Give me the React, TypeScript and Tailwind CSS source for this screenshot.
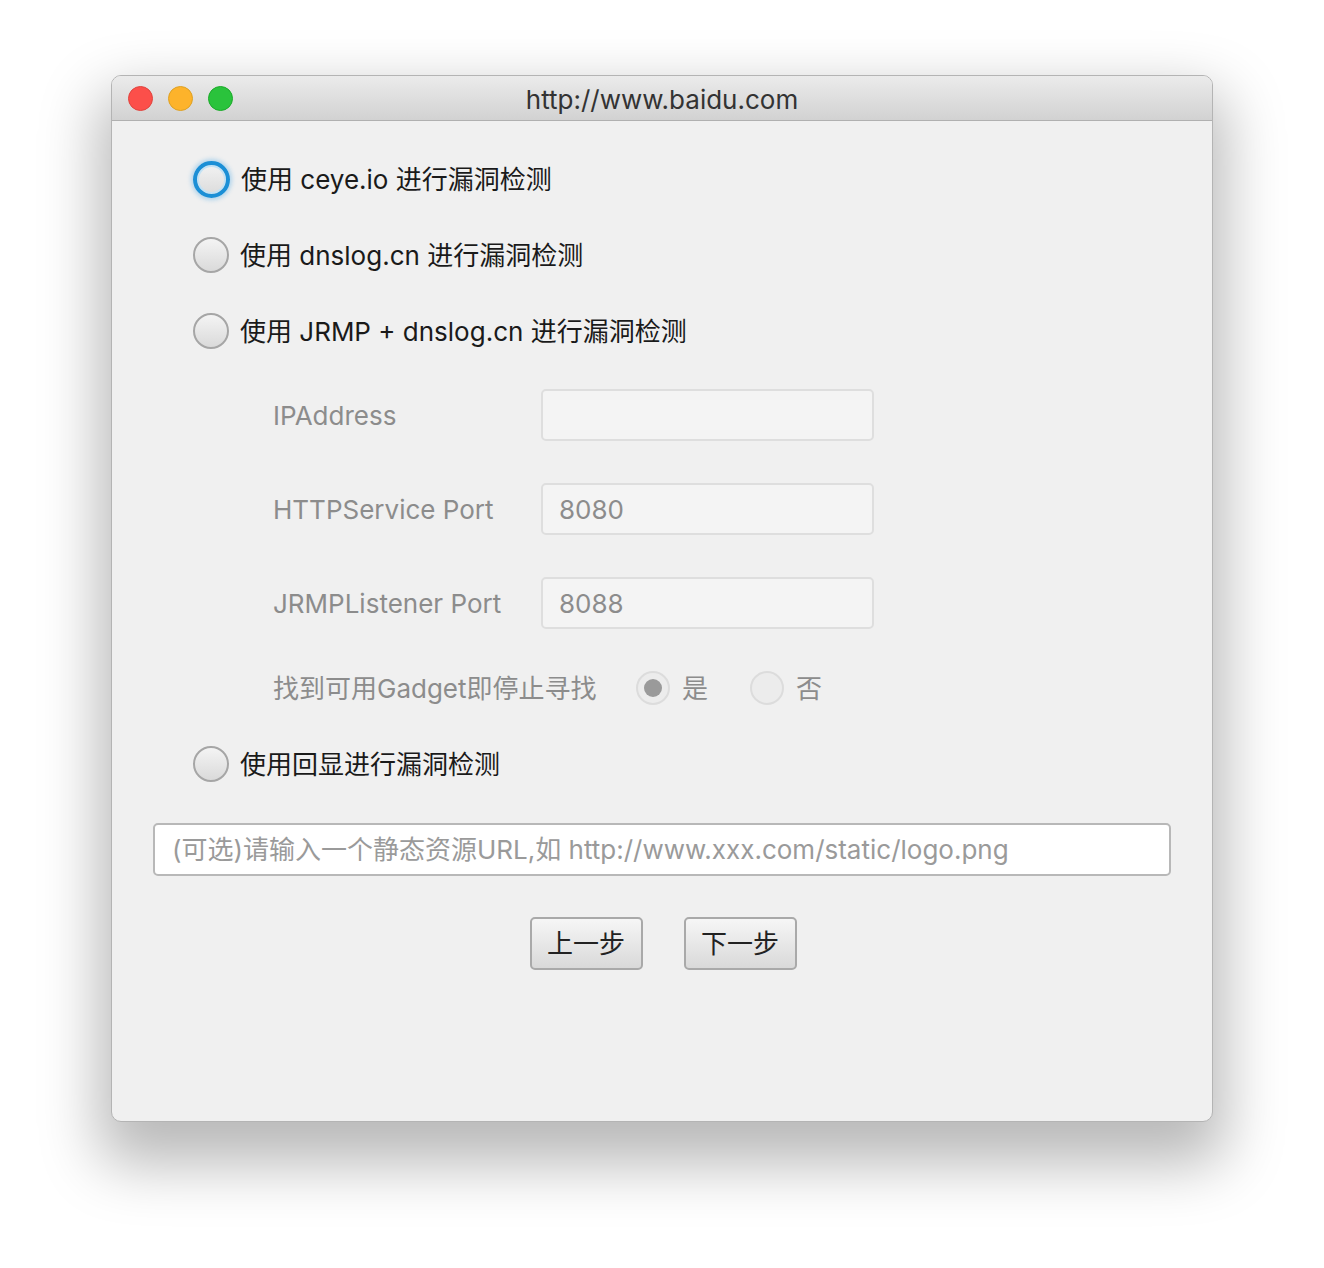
import React, {useState} from 'react'

const font = {fontFamily: 'Inter, "Noto Sans CJK SC", sans-serif'}

const Radio: React.FC<{checked?: boolean; focused?: boolean; disabled?: boolean}> = ({checked, focused, disabled}) => {
    if (disabled) {
        return (
            <span className="flex h-[34px] w-[34px] shrink-0 items-center justify-center rounded-full border-2 border-[#dcdcdc] bg-[#ececec]">
                {checked && <span className="h-[18px] w-[18px] rounded-full bg-[#9a9a9a]" />}
            </span>
        )
    }
    return (
        <span
            className={
                focused
                    ? 'flex h-[37px] w-[37px] shrink-0 items-center justify-center rounded-full border-[4px] border-[#1b8fd6] bg-gradient-to-b from-[#f2f2f2] to-[#dcdcdc] shadow-[0_0_4px_2px_rgba(80,170,230,0.4),inset_0_0_0_2px_#c4e2f4]'
                    : 'flex h-[36px] w-[36px] shrink-0 items-center justify-center rounded-full border-2 border-[#a6a6a6] bg-gradient-to-b from-[#f4f4f4] to-[#dadada]'
            }
        >
            {checked && <span className="h-[14px] w-[14px] rounded-full bg-[#333]" />}
        </span>
    )
}

const Option: React.FC<{label: string; focused?: boolean}> = ({label, focused}) => (
    <div className="flex h-[76px] items-center gap-[11px] pl-[81px]">
        <Radio focused={focused} />
        <span className="text-[26px] text-[#1a1a1a]">{label}</span>
    </div>
)

const Field: React.FC<{label: string; value: string; className?: string}> = ({label, value, className}) => (
    <div className={`flex h-[52px] items-center pl-[161px] ${className ?? ''}`}>
        <span className="w-[268px] text-[26px] text-[#8c8c8c]">{label}</span>
        <div className="flex h-[52px] w-[333px] items-center rounded-[5px] border-2 border-[#dedede] bg-[#f4f4f4] px-[16px] text-[26px] text-[#8c8c8c]">
            {value}
        </div>
    </div>
)

const App: React.FC = () => {
    const [url, setUrl] = useState('')

    return (
        <div className="min-h-[1268px] bg-white pt-[75px] pl-[111px]" style={font}>
            <div className="w-[1102px] overflow-hidden rounded-[10px] border border-[#b4b4b4] bg-[#f0f0f0] shadow-[0_30px_60px_12px_rgba(0,0,0,0.28)]">
                {/* title bar */}
                <div className="relative flex h-[45px] items-center justify-center border-b border-[#b0b0b0] bg-gradient-to-b from-[#ebebeb] to-[#d2d2d2] pt-[3px]">
                    <div className="absolute left-[16px] top-[10px] flex gap-[15px]">
                        <span className="h-[25px] w-[25px] rounded-full border border-[#e0443e] bg-[#fc4f4a]" />
                        <span className="h-[25px] w-[25px] rounded-full border border-[#dea123] bg-[#fdb32b]" />
                        <span className="h-[25px] w-[25px] rounded-full border border-[#1aab29] bg-[#2ac33c]" />
                    </div>
                    <span className="text-[26px] text-[#333]">http://www.baidu.com</span>
                </div>

                <div className="h-[1000px] pt-[20px]">
                    <Option label="使用 ceye.io 进行漏洞检测" focused />
                    <Option label="使用 dnslog.cn 进行漏洞检测" />
                    <Option label="使用 JRMP + dnslog.cn 进行漏洞检测" />

                    <Field label="IPAddress" value="" className="mt-[20px]" />
                    <Field label="HTTPService Port" value="8080" className="mt-[42px]" />
                    <Field label="JRMPListener Port" value="8088" className="mt-[42px]" />

                    <div className="mt-[33px] flex h-[52px] items-center pl-[161px] text-[26px] text-[#8c8c8c]">
                        <span className="w-[363px]">找到可用Gadget即停止寻找</span>
                        <Radio disabled checked />
                        <span className="ml-[12px] w-[68px]">是</span>
                        <Radio disabled />
                        <span className="ml-[12px]">否</span>
                    </div>

                    <div className="mt-[12px]">
                        <Option label="使用回显进行漏洞检测" />
                    </div>

                    <div className="mt-[21px] px-[41px]">
                        <input
                            value={url}
                            onChange={(e) => setUrl(e.target.value)}
                            placeholder="(可选)请输入一个静态资源URL,如 http://www.xxx.com/static/logo.png"
                            className="h-[53px] w-full rounded-[5px] border-2 border-[#b8b8b8] bg-white px-[17px] text-[26px] text-[#333] outline-none placeholder:text-[#9a9a9a]"
                            style={font}
                        />
                    </div>

                    <div className="mt-[41px] flex justify-center gap-[41px] pl-[2px]">
                        <button className="h-[53px] w-[113px] rounded-[5px] border-2 border-[#a9a9a9] bg-gradient-to-b from-[#f6f6f6] to-[#d9d9d9] text-[26px] text-[#222]">
                            上一步
                        </button>
                        <button className="h-[53px] w-[113px] rounded-[5px] border-2 border-[#a9a9a9] bg-gradient-to-b from-[#f6f6f6] to-[#d9d9d9] text-[26px] text-[#222]">
                            下一步
                        </button>
                    </div>
                </div>
            </div>
        </div>
    )
}

export default App
